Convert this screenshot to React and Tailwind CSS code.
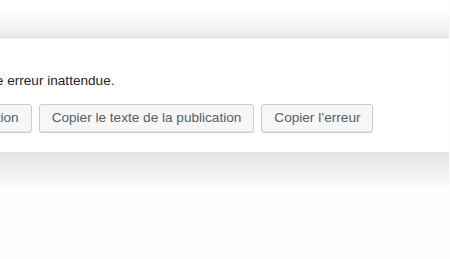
import React from 'react';

const ACTIONS = [
  'Tentative de récupération',
  'Copier le texte de la publication',
  'Copier l’erreur',
];

export default function App() {
  return (
    <div
      className="w-[450px] h-[259px] overflow-hidden bg-[#fdfdfd] text-[13.6px]"
      style={{ fontFamily: '"Liberation Sans", Arial, sans-serif' }}
    >
      <div className="w-[449px]">
        <div className="h-[8px] bg-white" />
        <div className="h-[30px] bg-gradient-to-b from-white to-[#eaeceb] border-b border-[#dcdddc]" />
        <div className="h-[114px] bg-white pt-[34px]">
          <div className="ml-[-147px] flex flex-col gap-[14px] whitespace-nowrap">
            <p className="text-[#1e1e1e] leading-[18px]">L’éditeur a rencontré une erreur inattendue.</p>
            <div className="flex gap-[7px]">
              {ACTIONS.map(a => (
                <button
                  key={a}
                  type="button"
                  className="h-[29px] px-[12px] rounded-[3px] border border-[#cccccc] bg-[#f7f7f7] text-[#555d66] shadow-[inset_0_-1px_0_#e2e2e2]"
                >
                  {a}
                </button>
              ))}
            </div>
          </div>
        </div>
        <div className="h-[35px] bg-gradient-to-b from-[#e3e3e3] to-[#fbfbfb]" />
      </div>
    </div>
  );
}
